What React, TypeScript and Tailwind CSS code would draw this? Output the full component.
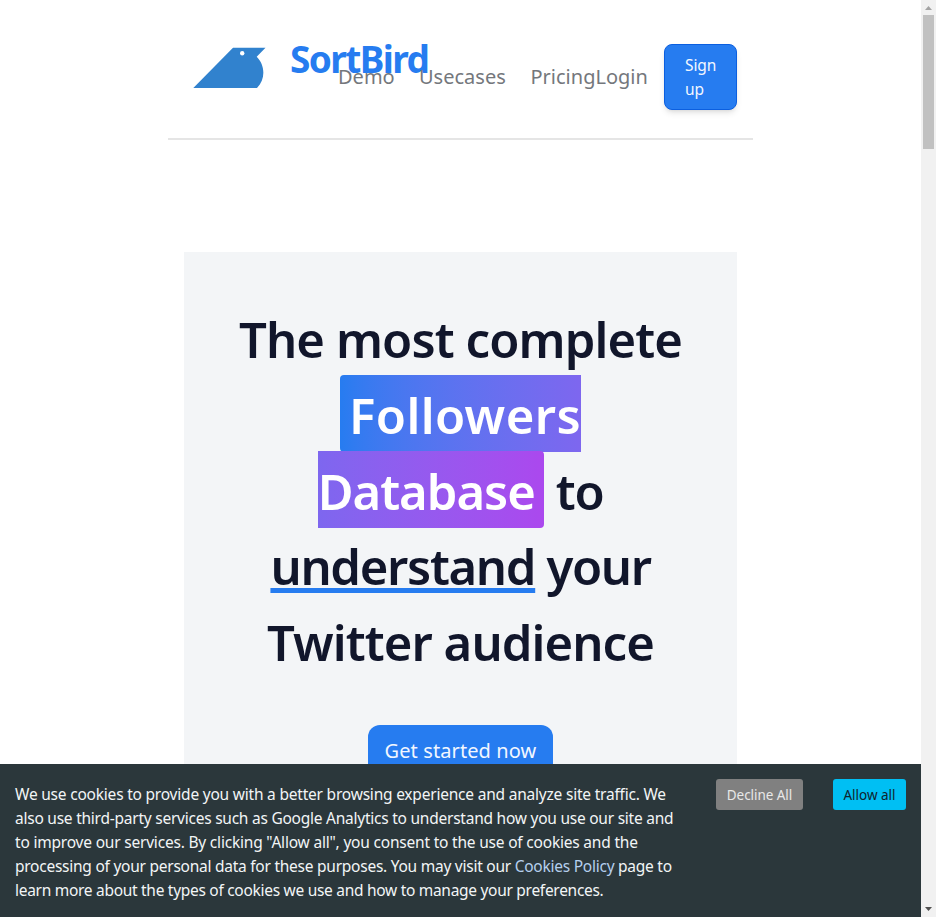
export default function App() {
  return (
    <div className="flex h-[917px] w-[936px] overflow-hidden bg-white font-['Noto_Sans','Liberation_Sans',sans-serif]">
      <div className="relative h-full w-[921px] overflow-hidden">
        <div className="mx-auto w-[585px]">
          <header className="flex h-[140px] border-b-2 border-[#e5e5e5] pt-[44px]">
            <svg className="ml-[25px] mt-[3px] h-[42px] w-[74px] shrink-0" viewBox="0 0 74 42">
              <path d="M.3 41L40 .7H72.500L63.700 9.800C72 18 73 32 64 41Z" fill="#3182ce" />
              <circle cx="49.200" cy="6.300" r="2.200" fill="#fff" />
            </svg>
            <a className="-mt-[13px] ml-[23px] w-[48px] whitespace-nowrap text-[37px] leading-[56px] font-bold tracking-[-1.6px] text-[#267cf0]">SortBird</a>
            <nav className="flex h-[66px] items-center whitespace-nowrap text-[20px] text-[#74777c]">
              <a className="w-[81px]">Demo</a>
              <a className="w-[111.500px]">Usecases</a>
              <a>Pricing</a>
              <a>Login</a>
            </nav>
            <button className="mr-4 ml-auto h-[66px] w-[73px] rounded-lg border border-[#0b5fe0] bg-[#267cf0] pr-4 pl-5 text-left text-[15.5px] leading-6 tracking-[-0.1px] text-[#f2f7ff] shadow-md">Sign up</button>
          </header>
          <main className="mx-4 mt-[112px] h-[665px] bg-[#f3f5f7] pt-[50px] text-center">
            <h1 className="text-[49px] leading-[75.800px] font-semibold tracking-[-0.9px] whitespace-nowrap text-[#11162b]">
              <span className="block">The most complete</span>
              <span className="block">
                <span className="rounded bg-linear-to-r from-[#267cf0] to-[#ab48ee] px-[9px] pt-[7px] pb-[4px] text-white">
                  <span className="tracking-[0.4px]">Followers</span>
                  <br />
                  <span className="tracking-[-1px]">Database</span>
                </span>{" "}
                <span className="tracking-[-1.300px]">to</span>
              </span>
              <span className="block">
                <span className="tracking-[-1.3px] underline decoration-[#267cf0] decoration-[5px] underline-offset-[3px] [text-decoration-skip-ink:none]">understand</span>
                <span className="tracking-[-1.400px]"> your</span>
              </span>
              <span className="block">Twitter audience</span>
            </h1>
            <button className="mt-[44px] h-[52px] w-[185px] rounded-xl bg-[#267cf0] text-[20px] tracking-[0.1px] text-[#f2f7ff]">Get started now</button>
          </main>
        </div>
        <footer className="absolute inset-x-0 bottom-0 flex h-[153px] items-start bg-[#2b373b] text-[#f2f5f6]">
          <p className="w-[716px] py-[18px] pl-[15px] text-[15.5px] leading-6 whitespace-nowrap">
            <span className="block tracking-[-0.21px]">We use cookies to provide you with a better browsing experience and analyze site traffic. We</span>
            <span className="block tracking-[-0.24px]">also use third-party services such as Google Analytics to understand how you use our site and</span>
            <span className="block tracking-[-0.2px]">to improve our services. By clicking "Allow all", you consent to the use of cookies and the</span>
            <span className="block tracking-[-0.25px]">processing of your personal data for these purposes. You may visit our <a className="text-[#b5cfee]">Cookies Policy</a> page to</span>
            <span className="block tracking-[-0.29px]">learn more about the types of cookies we use and how to manage your preferences.</span>
          </p>
          <button className="mt-[15px] h-[31px] w-[87px] rounded-[3px] bg-[#808080] pt-px text-[13.5px] tracking-[-0.05px] text-[#e8e8e8]">Decline All</button>
          <button className="mt-[15px] ml-[30px] h-[31px] w-[73px] rounded-[3px] bg-[#00bff3] pt-px text-[13.5px] text-[#10242d]">Allow all</button>
        </footer>
      </div>
      <aside className="flex w-[15px] flex-col items-center bg-[#f1f1f1]">
        <svg className="h-[15px] w-[15px]" viewBox="0 0 15 15"><path d="M4 10L7.500 6L11 10Z" fill="#a3a3a3" /></svg>
        <div className="h-[134px] w-[11px] bg-[#c1c1c1]" />
        <svg className="mt-auto h-[15px] w-[15px]" viewBox="0 0 15 15"><path d="M4 5L7.500 9L11 5Z" fill="#505050" /></svg>
      </aside>
    </div>
  );
}
